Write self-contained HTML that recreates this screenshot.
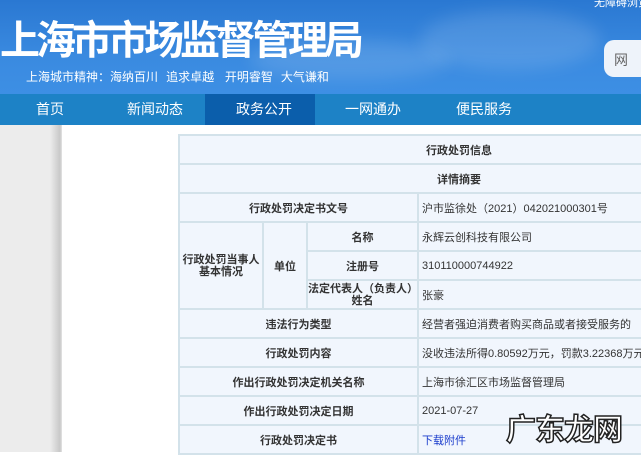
<!DOCTYPE html>
<html><head><meta charset="utf-8"><style>
*{margin:0;padding:0;box-sizing:border-box}
body{width:641px;height:452px;overflow:hidden;background:#fff;font-family:"Liberation Sans","Noto Sans CJK SC",sans-serif;position:relative}
.hd{position:absolute;left:0;top:0;width:641px;height:94px;background:linear-gradient(180deg,#2a78d2 0%,#3a8ae0 60%,#3d8fe4 100%)}
.hd .cl{position:absolute;border-radius:50%;background:rgba(255,255,255,.12);filter:blur(8px)}
.t{position:absolute;left:0;top:8px;font-size:40px;font-weight:bold;color:#fff;letter-spacing:-4px;white-space:nowrap;font-family:"Noto Sans CJK SC",sans-serif}
.s{position:absolute;left:26px;top:68px;font-size:12px;color:#fff;white-space:nowrap;font-family:"Noto Sans CJK SC",sans-serif}
.tr{position:absolute;left:594px;top:-6px;font-size:11px;color:#fff;white-space:nowrap}
.bx{position:absolute;left:604px;top:40px;width:50px;height:37px;background:#eef3fa;border-radius:10px;font-size:14px;color:#666;padding:10px 0 0 10px}
.nav{position:absolute;left:0;top:94px;width:641px;height:31px;background:#1d82c6}
.nav span{position:absolute;top:0;line-height:31px;color:#fff;font-size:14px;font-family:"Noto Sans CJK SC",sans-serif}
.nav .a{left:205px;width:110px;height:31px;background:#0b5eab}
.gl{position:absolute;left:0;top:125px;width:62px;height:327px;background:linear-gradient(90deg,#ececec 0,#ececec 50px,#c8c8c8 60px,#e4e4e4 62px)}
table{position:absolute;left:178px;top:134px;border-collapse:collapse;table-layout:fixed;width:560px;font-size:11px;color:#333;font-family:"Liberation Sans","Noto Sans CJK SC",sans-serif}
td{border:2px solid #d3e2ea;background:#f1f6fd;height:29px;padding:0;text-align:center;white-space:nowrap;overflow:hidden}
td.v{text-align:left;padding-left:3px}
td b{font-weight:bold}
a{color:#1a3ccc}
.wm{position:absolute;left:506px;top:405px;font-size:30px;font-weight:bold;color:#fff;-webkit-text-stroke:1.5px #222;font-family:"Noto Sans CJK SC",sans-serif;letter-spacing:-1px}
</style></head><body>
<div class="hd">
<div class="cl" style="left:420px;top:10px;width:180px;height:60px"></div>
<div class="cl" style="left:250px;top:40px;width:200px;height:40px"></div>
<div class="t">上海市市场监督管理局</div>
<div class="s">上海城市精神：海纳百川&nbsp;&nbsp;&nbsp;追求卓越&nbsp;&nbsp;&nbsp;&nbsp;开明睿智&nbsp;&nbsp;&nbsp;大气谦和</div>
<div class="tr">无障碍浏览</div>
<div class="bx">网</div>
</div>
<div class="nav"><span class="a"></span>
<span style="left:36px">首页</span><span style="left:127px">新闻动态</span><span style="left:236px">政务公开</span><span style="left:345px">一网通办</span><span style="left:456px">便民服务</span></div>
<div class="gl"></div>
<table>
<colgroup><col style="width:84px"><col style="width:44px"><col style="width:111px"><col style="width:321px"></colgroup>
<tr><td colspan="4"><b>行政处罚信息</b></td></tr>
<tr><td colspan="4"><b>详情摘要</b></td></tr>
<tr><td colspan="3"><b>行政处罚决定书文号</b></td><td class="v">沪市监徐处（2021）042021000301号</td></tr>
<tr><td rowspan="3" style="line-height:12px"><b>行政处罚当事人<br>基本情况</b></td><td rowspan="3"><b>单位</b></td><td><b>名称</b></td><td class="v">永辉云创科技有限公司</td></tr>
<tr><td><b>注册号</b></td><td class="v">310110000744922</td></tr>
<tr><td style="line-height:12px"><b>法定代表人（负责人）<br>姓名</b></td><td class="v">张豪</td></tr>
<tr><td colspan="3"><b>违法行为类型</b></td><td class="v">经营者强迫消费者购买商品或者接受服务的</td></tr>
<tr><td colspan="3"><b>行政处罚内容</b></td><td class="v">没收违法所得0.80592万元，罚款3.22368万元</td></tr>
<tr><td colspan="3"><b>作出行政处罚决定机关名称</b></td><td class="v">上海市徐汇区市场监督管理局</td></tr>
<tr><td colspan="3"><b>作出行政处罚决定日期</b></td><td class="v">2021-07-27</td></tr>
<tr><td colspan="3"><b>行政处罚决定书</b></td><td class="v"><a>下载附件</a></td></tr>
</table>
<div class="wm">广东龙网</div>
</body></html>
